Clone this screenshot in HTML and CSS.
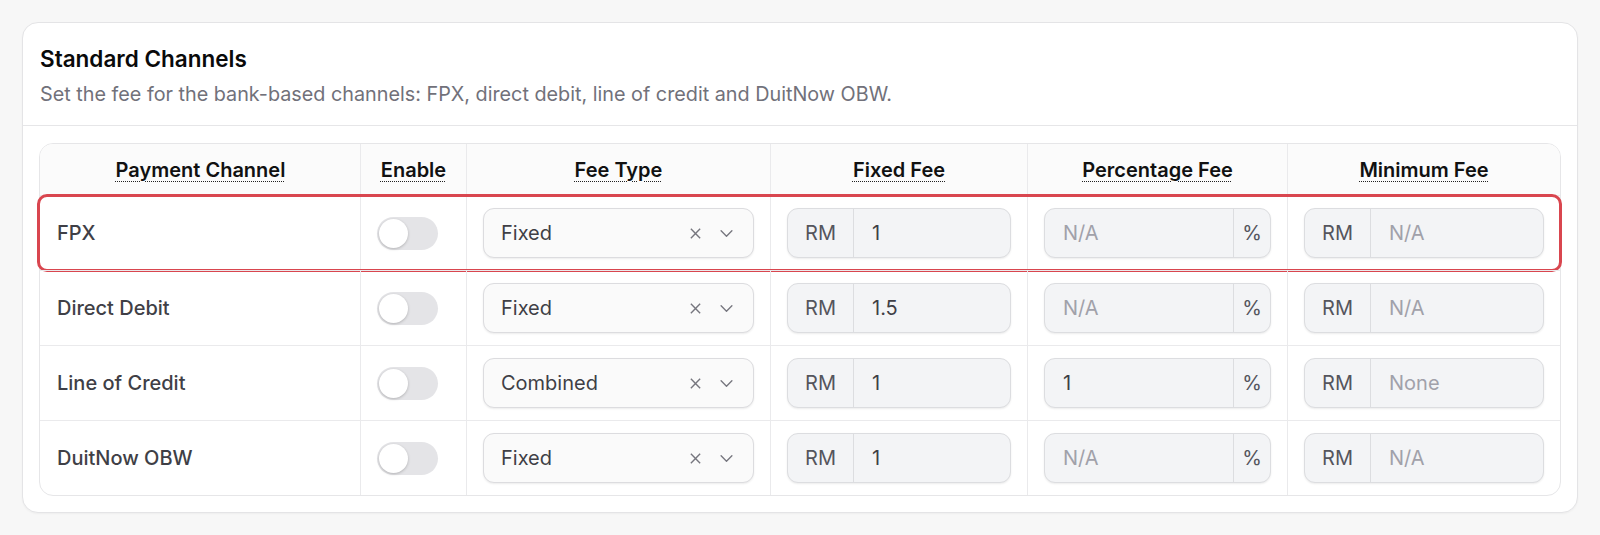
FILE: index.html
```html
<!DOCTYPE html>
<html lang="en">
<head>
<meta charset="utf-8">
<title>Standard Channels</title>
<link rel="stylesheet" href="styles.css">
</head>
<body>
<section class="card">
  <header class="card-head">
    <h2 class="title">Standard Channels</h2>
    <p class="subtitle">Set the fee for the bank-based channels: FPX, direct debit, line of credit and DuitNow OBW.</p>
  </header>
  <div class="card-body">
    <div class="fee-table">
      <div class="row head">
        <div class="cell"><span class="th">Payment Channel</span></div>
        <div class="cell"><span class="th">Enable</span></div>
        <div class="cell"><span class="th">Fee Type</span></div>
        <div class="cell"><span class="th">Fixed Fee</span></div>
        <div class="cell"><span class="th">Percentage Fee</span></div>
        <div class="cell"><span class="th">Minimum Fee</span></div>
      </div>

      <div class="row highlighted">
        <div class="cell label">FPX</div>
        <div class="cell"><span class="toggle"><span class="knob"></span></span></div>
        <div class="cell">
          <div class="select"><span class="sel-value">Fixed</span>
            <svg class="ico-x" viewBox="0 0 14 14"><path d="M2 2L12 12M12 2L2 12"/></svg>
            <svg class="ico-chev" viewBox="0 0 16 10"><path d="M2 2L8 8L14 2"/></svg>
          </div>
        </div>
        <div class="cell"><div class="group"><span class="addon left">RM</span><span class="val">1</span></div></div>
        <div class="cell"><div class="group"><span class="val ph">N/A</span><span class="addon right">%</span></div></div>
        <div class="cell"><div class="group"><span class="addon left">RM</span><span class="val ph">N/A</span></div></div>
      </div>

      <div class="row">
        <div class="cell label">Direct Debit</div>
        <div class="cell"><span class="toggle"><span class="knob"></span></span></div>
        <div class="cell">
          <div class="select"><span class="sel-value">Fixed</span>
            <svg class="ico-x" viewBox="0 0 14 14"><path d="M2 2L12 12M12 2L2 12"/></svg>
            <svg class="ico-chev" viewBox="0 0 16 10"><path d="M2 2L8 8L14 2"/></svg>
          </div>
        </div>
        <div class="cell"><div class="group"><span class="addon left">RM</span><span class="val">1.5</span></div></div>
        <div class="cell"><div class="group"><span class="val ph">N/A</span><span class="addon right">%</span></div></div>
        <div class="cell"><div class="group"><span class="addon left">RM</span><span class="val ph">N/A</span></div></div>
      </div>

      <div class="row">
        <div class="cell label">Line of Credit</div>
        <div class="cell"><span class="toggle"><span class="knob"></span></span></div>
        <div class="cell">
          <div class="select"><span class="sel-value">Combined</span>
            <svg class="ico-x" viewBox="0 0 14 14"><path d="M2 2L12 12M12 2L2 12"/></svg>
            <svg class="ico-chev" viewBox="0 0 16 10"><path d="M2 2L8 8L14 2"/></svg>
          </div>
        </div>
        <div class="cell"><div class="group"><span class="addon left">RM</span><span class="val">1</span></div></div>
        <div class="cell"><div class="group"><span class="val">1</span><span class="addon right">%</span></div></div>
        <div class="cell"><div class="group"><span class="addon left">RM</span><span class="val ph">None</span></div></div>
      </div>

      <div class="row">
        <div class="cell label">DuitNow OBW</div>
        <div class="cell"><span class="toggle"><span class="knob"></span></span></div>
        <div class="cell">
          <div class="select"><span class="sel-value">Fixed</span>
            <svg class="ico-x" viewBox="0 0 14 14"><path d="M2 2L12 12M12 2L2 12"/></svg>
            <svg class="ico-chev" viewBox="0 0 16 10"><path d="M2 2L8 8L14 2"/></svg>
          </div>
        </div>
        <div class="cell"><div class="group"><span class="addon left">RM</span><span class="val">1</span></div></div>
        <div class="cell"><div class="group"><span class="val ph">N/A</span><span class="addon right">%</span></div></div>
        <div class="cell"><div class="group"><span class="addon left">RM</span><span class="val ph">N/A</span></div></div>
      </div>
    </div>
  </div>
</section>
</body>
</html>
```

FILE: styles.css
```css
* { box-sizing: border-box; }

html, body {
  margin: 0;
  padding: 0;
  background: #f7f7f7;
  font-family: Inter, "Noto Sans", "Liberation Sans", sans-serif;
  color: #3f3f46;
}

body {
  padding: 22px;
}

.card {
  background: #ffffff;
  border: 1px solid #e4e4e6;
  border-radius: 16px;
  box-shadow: 0 1px 2px rgba(0, 0, 0, 0.04);
}

.card-head {
  padding: 21px 17px 17px;
  border-bottom: 1px solid #e6e6e8;
}

.title {
  margin: 0;
  font-size: 22.5px;
  line-height: 30px;
  font-weight: 600;
  color: #0a0a0a;
}

.subtitle {
  margin: 6px 0 0;
  font-size: 19.8px;
  line-height: 28px;
  color: #71717a;
}

.card-body {
  padding: 17px 16px 16px;
}

.fee-table {
  border: 1px solid #e6e6e8;
  border-radius: 14px;
}

.row {
  display: grid;
  grid-template-columns: 320px 106px 304px 257px 260px 1fr;
  height: 75px;
  border-top: 1px solid #eaeaec;
  position: relative;
}

.row.head {
  height: 51px;
  border-top: none;
  background: #fbfbfb;
  border-radius: 13px 13px 0 0;
}

.row.highlighted::after {
  content: "";
  position: absolute;
  top: -2px;
  bottom: -2px;
  left: -3px;
  right: -2px;
  border: 3px solid #d9464f;
  border-radius: 10px;
  pointer-events: none;
}

.cell {
  display: flex;
  align-items: center;
  padding: 0 16px;
  border-left: 1px solid #eaeaec;
  min-width: 0;
}

.cell:first-child {
  border-left: none;
  padding-left: 17px;
}

.row.head .cell {
  justify-content: center;
}

.th {
  font-size: 20px;
  font-weight: 600;
  color: #111111;
  text-decoration: underline dotted #222;
  text-decoration-thickness: 1px;
  text-underline-offset: 4px;
}

.label {
  font-size: 20px;
  font-weight: 500;
  color: #3f3f46;
}

.toggle {
  display: inline-block;
  position: relative;
  width: 61px;
  height: 33px;
  border-radius: 17px;
  background: #e4e4e7;
}

.knob {
  position: absolute;
  left: 2px;
  top: 2px;
  width: 29px;
  height: 29px;
  border-radius: 50%;
  background: #ffffff;
  box-shadow: 0 1px 3px rgba(0, 0, 0, 0.22);
}

.select {
  width: 100%;
  height: 50px;
  display: flex;
  align-items: center;
  padding: 0 19px 0 17px;
  background: #fafafa;
  border: 1px solid #dcdcdf;
  border-radius: 11px;
  box-shadow: 0 1px 2px rgba(0, 0, 0, 0.08);
  font-size: 20px;
  color: #3f3f46;
}

.sel-value {
  flex: 1;
}

.ico-x {
  width: 13px;
  height: 13px;
  fill: none;
  stroke: #76767e;
  stroke-width: 1.5;
  margin-right: 17px;
}

.ico-chev {
  width: 15px;
  height: 9px;
  fill: none;
  stroke: #76767e;
  stroke-width: 1.5;
  stroke-linecap: round;
  stroke-linejoin: round;
}

.group {
  width: 100%;
  height: 50px;
  display: flex;
  align-items: stretch;
  background: #f3f4f6;
  border: 1px solid #dcdde0;
  border-radius: 11px;
  box-shadow: 0 1px 2px rgba(0, 0, 0, 0.08);
  font-size: 20px;
}

.addon {
  display: flex;
  align-items: center;
  justify-content: center;
  color: #55555d;
}

.addon.left {
  width: 66px;
  border-right: 1px solid #dcdde0;
}

.addon.right {
  width: 37px;
  border-left: 1px solid #dcdde0;
}

.val {
  flex: 1;
  display: flex;
  align-items: center;
  padding-left: 18px;
  color: #3f3f46;
}

.val.ph {
  color: #a1a1aa;
}
```
